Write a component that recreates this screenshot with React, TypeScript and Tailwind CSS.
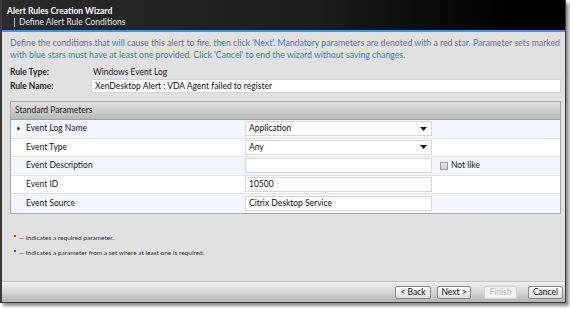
import { useState } from "react";

const rows = [
  { label: "Event Log Name", kind: "select", value: "Application", required: true },
  { label: "Event Type", kind: "select", value: "Any" },
  { label: "Event Description", kind: "input", value: "", notLike: true },
  { label: "Event ID", kind: "input", value: "10500" },
  { label: "Event Source", kind: "input", value: "Citrix Desktop Service" },
];

function Caret() {
  return (
    <svg width="7" height="4" viewBox="0 0 7 4" className="shrink-0">
      <path d="M0 0h7L3.5 4z" fill="#111" />
    </svg>
  );
}

const btn =
  "h-[13px] text-[8.5px] leading-[11px] text-[#111] border border-[#8a8a8a] rounded-[2px] bg-[linear-gradient(180deg,#fdfdfd,#dcdcdc)]";

export default function App() {
  const [notLike, setNotLike] = useState(false);

  return (
    <div className="w-[570px] h-[309px] bg-white overflow-hidden font-['Lato',sans-serif]">
      <div className="w-[566px] h-[303px] flex flex-col bg-[#e1e1e1] border-l-2 border-r border-b border-[#3a3a3a] shadow-[3px_3px_3px_rgba(0,0,0,0.45)]">
        {/* Header */}
        <div className="h-[30px] shrink-0 bg-[linear-gradient(90deg,#2b2b2b_0%,#1c1c1c_55%,#000_90%)] pl-[5px] pt-[5px]">
          <div className="text-[8.5px] leading-[12px] font-bold text-white">Alert Rules Creation Wizard</div>
          <div className="flex items-center text-[8.5px] leading-[11px] text-[#e6e6e6] pl-[7px]">
            <span className="w-px h-[9px] bg-[#bbb] mr-[4px]" />
            Define Alert Rule Conditions
          </div>
        </div>
        <div className="h-[2px] shrink-0 bg-[#4f8fd8]" />

        {/* Body */}
        <div className="flex-1 flex flex-col pl-[8px] pr-[4px]">
          <p className="mt-[5px] text-[8.7px] leading-[12px] text-[#3c7ad0]">
            Define the conditions that will cause this alert to fire, then click 'Next'. Mandatory parameters are denoted with a red star. Parameter sets marked with blue stars must have at least one provided. Click 'Cancel' to end the wizard without saving changes.
          </p>

          <div className="mt-[4px] flex items-center h-[14px] text-[8.5px] text-[#222]">
            <span className="w-[83px] font-bold">Rule Type:</span>
            <span>Windows Event Log</span>
          </div>
          <div className="flex items-center h-[14px] text-[8.5px] text-[#222]">
            <span className="w-[81px] font-bold">Rule Name:</span>
            <div className="flex-1 h-[14px] bg-white border border-[#d4d4d4] pl-[3px] leading-[12px] text-[#111]">
              XenDesktop Alert : VDA Agent failed to register
            </div>
          </div>

          {/* Parameters table */}
          <div className="mt-[8px] border border-[#a9a9a9] bg-white">
            <div className="h-[18px] flex items-center pl-[4px] text-[8.5px] text-[#222] bg-[linear-gradient(180deg,#e2e2e2_0%,#c9c9c9_60%,#b9b9b9_100%)] border-b border-[#9f9f9f]">
              Standard Parameters
            </div>
            {rows.map((r, i) => (
              <div
                key={r.label}
                className={`h-[18.5px] flex items-center border-b border-[#e3e3e3] last:border-b-0 ${i % 2 === 0 ? "bg-[#f2f6fd]" : "bg-white"}`}
              >
                <span className="w-[15px] flex justify-center">
                  {r.required && <span className="w-[3px] h-[3px] rounded-full bg-[#a01010]" />}
                </span>
                <span className="w-[219px] text-[8.5px] text-[#222]">{r.label}</span>
                {r.kind === "select" ? (
                  <div className="w-[187px] h-[15px] bg-white border border-[#d8d8d8] flex items-center justify-between pl-[3px] pr-[4px] text-[8.5px] text-[#111]">
                    <span>{r.value}</span>
                    <Caret />
                  </div>
                ) : (
                  <div className="w-[187px] h-[15px] bg-white border border-[#d8d8d8] flex items-center pl-[3px] text-[8.5px] text-[#111]">
                    {r.value}
                  </div>
                )}
                {r.notLike && (
                  <label className="ml-[8px] flex items-center gap-[3px] text-[8.5px] text-[#222]">
                    <span
                      onClick={() => setNotLike(!notLike)}
                      className="w-[8px] h-[8px] border border-[#999] bg-[linear-gradient(180deg,#e8e8e8,#cfcfcf)]"
                    />
                    Not like
                  </label>
                )}
              </div>
            ))}
          </div>

          {/* Legend */}
          <div className="mt-[20px] flex items-center gap-[3px] text-[6.5px] leading-[7px] text-[#333] pl-[4px]">
            <span className="w-[2px] h-[2px] rounded-full bg-[#a01010] -mt-[2px]" />
            <span>— Indicates a required parameter.</span>
          </div>
          <div className="mt-[8px] flex items-center gap-[3px] text-[6.5px] leading-[7px] text-[#333] pl-[4px]">
            <span className="w-[2px] h-[2px] rounded-full bg-[#1a2aa0] -mt-[2px]" />
            <span>— Indicates a parameter from a set where at least one is required.</span>
          </div>
        </div>

        {/* Footer */}
        <div className="h-[21px] shrink-0 border-t border-[#c4c4c4] bg-[linear-gradient(180deg,#f0f0f0_0%,#d6d6d6_50%,#b4b4b4_100%)] flex items-center justify-end pr-[2px]">
          <button className={`${btn} w-[36px]`}>&lt; Back</button>
          <button className={`${btn} w-[34px] ml-[6px]`}>Next &gt;</button>
          <button className="ml-[13px] h-[13px] w-[33px] text-[8.5px] leading-[11px] text-[#b8b8b8] border border-[#d0d0d0] rounded-[2px] bg-[#f2f2f2]">
            Finish
          </button>
          <button className={`${btn} w-[35px] ml-[11px]`}>Cancel</button>
        </div>
      </div>
    </div>
  );
}
